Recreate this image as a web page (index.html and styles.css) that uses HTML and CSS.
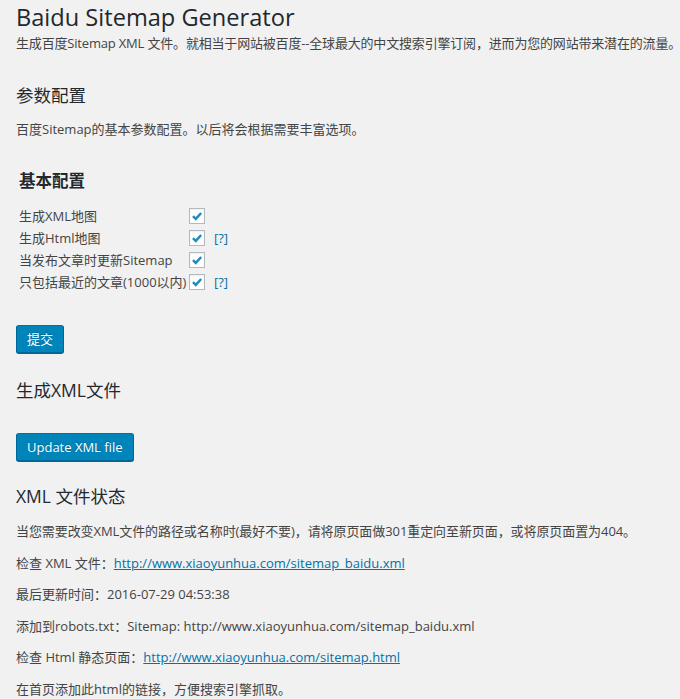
FILE: index.html
```html
<!DOCTYPE html>
<html lang="zh-CN">
<head>
<meta charset="utf-8">
<title>Baidu Sitemap Generator</title>
<link rel="stylesheet" href="styles.css">
</head>
<body>
<div class="wrap">
  <h1 class="title">Baidu Sitemap Generator</h1>
  <p class="desc">生成百度Sitemap XML 文件。就相当于网站被百度--全球最大的中文搜索引擎订阅，进而为您的网站带来潜在的流量。</p>

  <h2 class="section-title first">参数配置</h2>
  <p class="intro">百度Sitemap的基本参数配置。以后将会根据需要丰富选项。</p>

  <form class="options">
    <h3 class="sub-title">基本配置</h3>
    <div class="opt-grid">
      <span class="opt-label">生成XML地图</span>
      <span class="cb"><svg viewBox="0 0 16 16"><path d="M3.4 8.2 L6.6 11.3 L12.8 4.6"/></svg></span>
      <span class="help"></span>

      <span class="opt-label">生成Html地图</span>
      <span class="cb"><svg viewBox="0 0 16 16"><path d="M3.4 8.2 L6.6 11.3 L12.8 4.6"/></svg></span>
      <a class="help" href="#">[?]</a>

      <span class="opt-label">当发布文章时更新Sitemap</span>
      <span class="cb"><svg viewBox="0 0 16 16"><path d="M3.4 8.2 L6.6 11.3 L12.8 4.6"/></svg></span>
      <span class="help"></span>

      <span class="opt-label">只包括最近的文章(1000以内)</span>
      <span class="cb"><svg viewBox="0 0 16 16"><path d="M3.4 8.2 L6.6 11.3 L12.8 4.6"/></svg></span>
      <a class="help" href="#">[?]</a>
    </div>
  </form>
  <div class="btn-row submit-row"><button class="btn" type="button">提交</button></div>

  <h2 class="section-title gen">生成XML文件</h2>
  <div class="btn-row update-row"><button class="btn" type="button">Update XML file</button></div>

  <h2 class="section-title status">XML 文件状态</h2>
  <div class="status-list">
    <p class="tight">当您需要改变XML文件的路径或名称时(最好不要)，请将原页面做301重定向至新页面，或将原页面置为404。</p>
    <p>检查 XML 文件：<a href="#">http://www.xiaoyunhua.com/sitemap_baidu.xml</a></p>
    <p>最后更新时间：2016-07-29 04:53:38</p>
    <p>添加到robots.txt：Sitemap: http://www.xiaoyunhua.com/sitemap_baidu.xml</p>
    <p>检查 Html 静态页面：<a href="#">http://www.xiaoyunhua.com/sitemap.html</a></p>
    <p>在首页添加此html的链接，方便搜索引擎抓取。</p>
  </div>
</div>
</body>
</html>
```
FILE: styles.css
```css
html, body {
  margin: 0;
  padding: 0;
  background: #f1f1f1;
}
body {
  font-family: "Open Sans", "Noto Sans CJK SC", sans-serif;
  color: #444;
  font-size: 13px;
  line-height: 20px;
  overflow: hidden;
}
.wrap {
  padding-left: 16px;
}
p, h1, h2, h3 {
  margin: 0;
}
.title {
  margin-top: 3px;
  font-size: 23.6px;
  line-height: 29px;
  font-weight: 400;
  color: #23282d;
}
.desc {
  margin-top: 1px;
  white-space: nowrap;
  letter-spacing: -0.18px;
}
.section-title {
  font-size: 17.5px;
  line-height: 24px;
  font-weight: 400;
  color: #23282d;
}
.section-title.first { margin-top: 30px; }
.intro { margin-top: 12px; }
.options {
  padding-left: 3px;
}
.sub-title {
  margin-top: 30px;
  font-size: 16.5px;
  line-height: 24px;
  font-weight: 600;
  color: #23282d;
}
.opt-grid {
  margin-top: 12px;
  display: grid;
  grid-template-columns: 170px 25px auto;
  grid-auto-rows: 22px;
  align-items: center;
}
.opt-label {
  white-space: nowrap;
}
.cb {
  width: 14px;
  height: 14px;
  border: 1px solid #b4b9be;
  background: #fff;
  box-shadow: inset 0 1px 2px rgba(0,0,0,0.07);
  display: flex;
}
.cb svg {
  width: 14px;
  height: 14px;
  fill: none;
  stroke: #1e8cbe;
  stroke-width: 2.8;
}
.help {
  color: #0073aa;
  text-decoration: none;
  font-size: 13px;
}
.btn-row { display: flex; }
.submit-row { margin-top: 32px; }
.btn {
  height: 28px;
  padding: 0 10px 1px;
  font-family: "Open Sans", "Noto Sans CJK SC", sans-serif;
  font-size: 13px;
  color: #fff;
  background: #0085ba;
  border: 1px solid #0073aa;
  border-color: #0073aa #006799 #006799;
  border-radius: 3px;
  box-shadow: 0 1px 0 #006799;
  text-shadow: 0 -1px 1px #006799;
}
.section-title.gen { margin-top: 25px; }
.update-row { margin-top: 31px; }
.section-title.status { margin-top: 23px; }
.status-list {
  margin-top: 13px;
  display: flex;
  flex-direction: column;
  gap: 11.6px;
}
.status-list p { white-space: nowrap; }
.status-list p.tight { letter-spacing: -0.08px; }
.status-list a {
  color: #0073aa;
  text-decoration: underline;
}
```
